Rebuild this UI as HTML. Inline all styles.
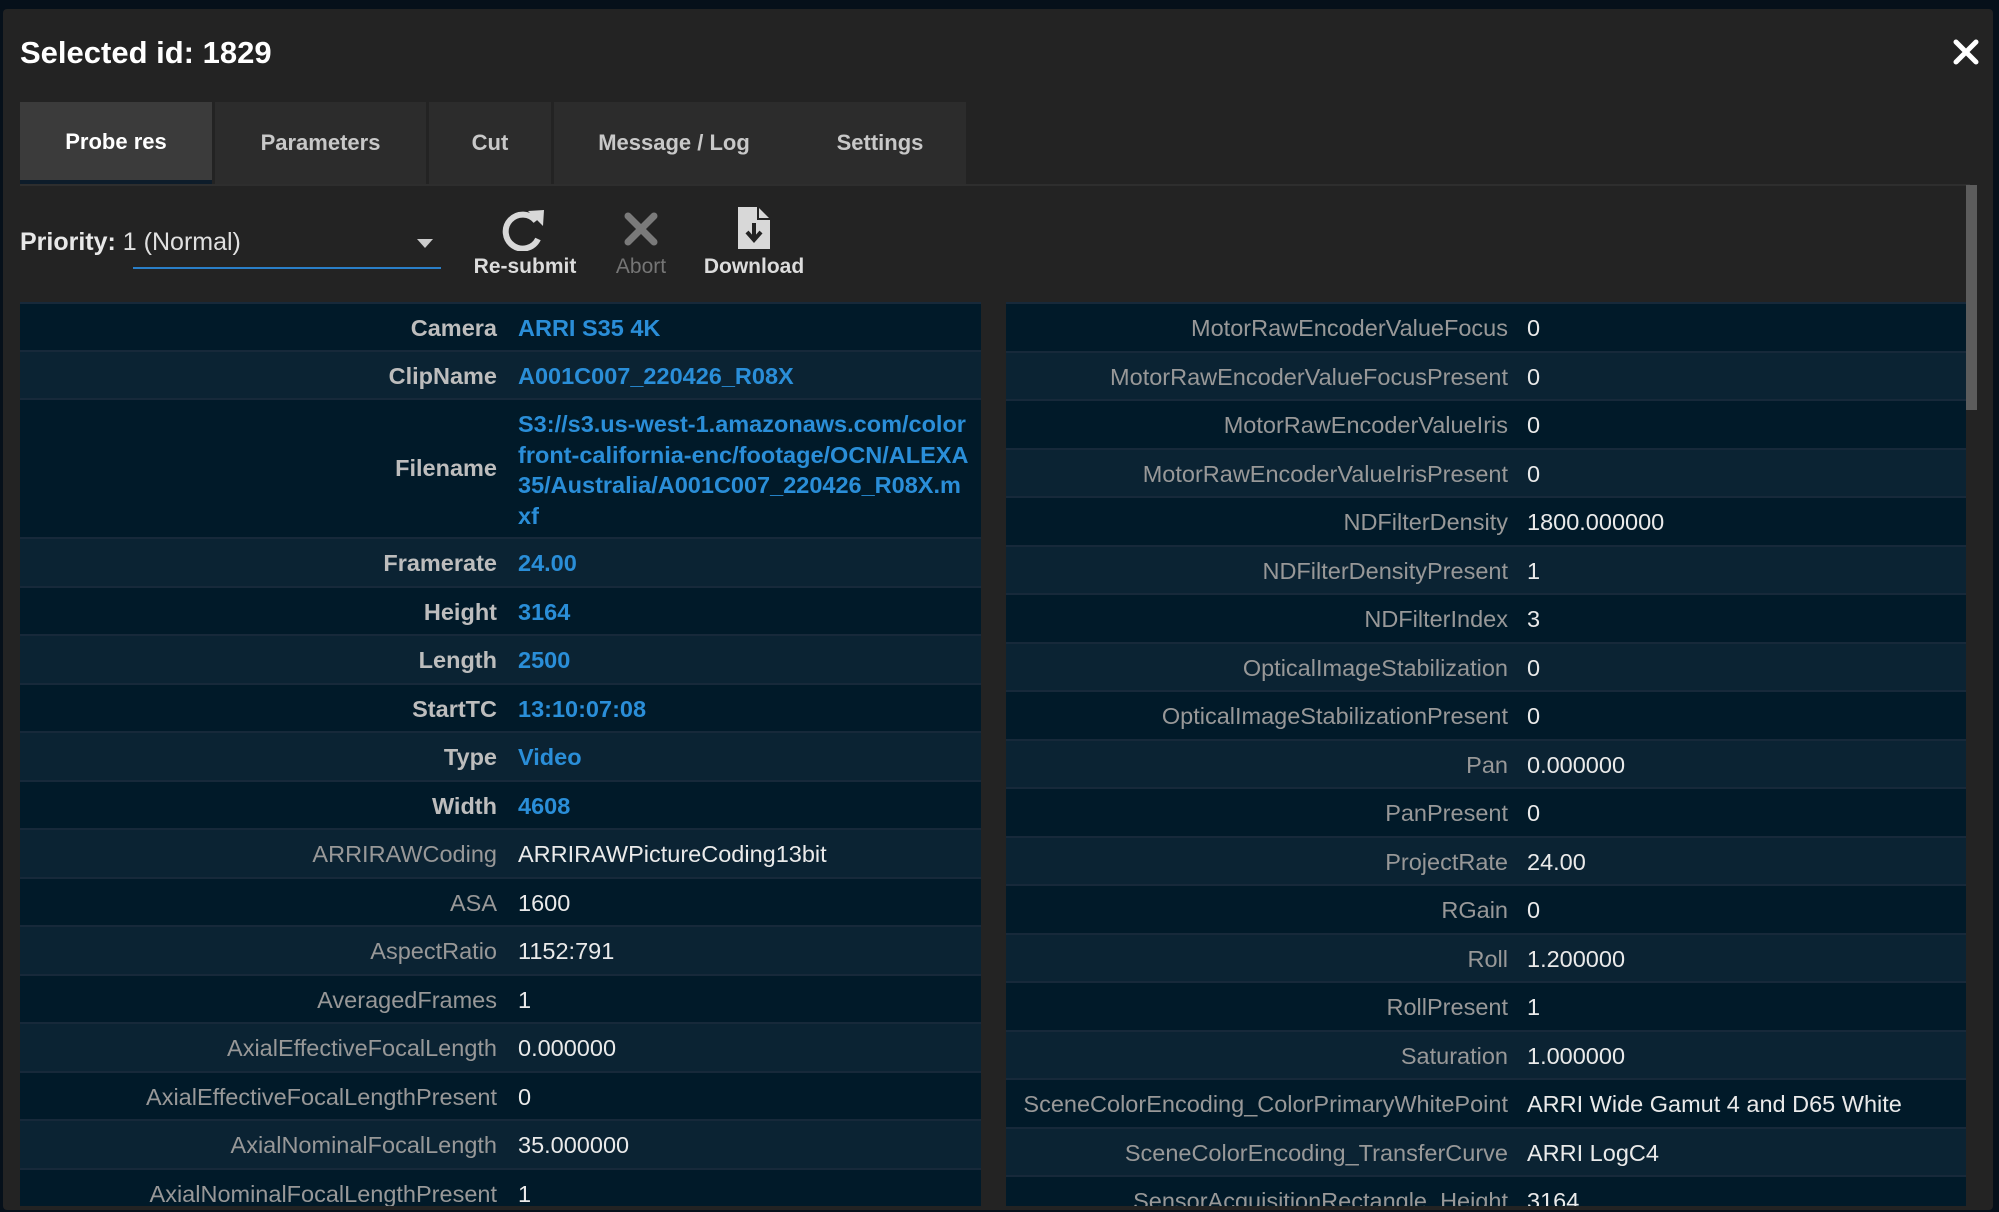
<!DOCTYPE html>
<html><head><meta charset="utf-8"><style>
*{margin:0;padding:0;box-sizing:border-box}
body{width:1999px;height:1212px;background:#06101a;overflow:hidden;font-family:"Liberation Sans",sans-serif;position:relative}
.modal{position:absolute;left:3px;top:9px;width:1990px;height:1201px;background:#232323;border-radius:4px;overflow:hidden}
.title{position:absolute;left:17px;top:26px;color:#fff;font-weight:bold;font-size:31px}
.close{position:absolute;left:1950px;top:30px}
.tabs{position:absolute;left:17px;top:93px;height:82px;width:946px;background:#2c2c2c}
.tab{position:absolute;top:0;height:82px;line-height:82px;text-align:center;color:#c8c8c8;font-size:22px;font-weight:bold}
.tab.a{background:#3b3b3b;color:#fff;border-bottom:4px solid #0d1c2a;line-height:80px}
.sep{position:absolute;top:0;width:3px;height:82px;background:#232323}
.hline{position:absolute;left:17px;top:175px;width:1950px;height:2px;background:#2e2e2e}
.prio{position:absolute;left:17px;top:219px;color:#e0e0e0;font-size:25px}
.prio b{color:#e8e8e8}
.uline{position:absolute;left:130px;top:258px;width:308px;height:2px;background:#2a7fc8}
.arrow{position:absolute;left:414px;top:230px;width:0;height:0;border-left:8px solid transparent;border-right:8px solid transparent;border-top:9px solid #ccc}
.btn{position:absolute;top:246px;font-size:21px;font-weight:bold;color:#dcdcdc;text-align:center}
.panel{position:absolute;top:293px;height:904px;overflow:hidden}
.row{position:absolute;left:0;width:100%;border-top:2px solid #17293a;font-size:23.5px}
.row .k{position:absolute;top:11px !important;text-align:right;color:#989898;white-space:nowrap}
.row .v{position:absolute;color:#eaeaea;white-space:nowrap}
.pl .k{right:484px !important}.pl .v{left:498px !important}
.d{background:#011a29}.l{background:#0b2333}
.row.h .k{color:#bdbdbd;font-weight:bold}.row.h .v{color:#2a8ed8;font-weight:bold}
.scroll{position:absolute;left:1963px;top:176px;width:11px;height:225px;background:#5c5c5c}
</style></head><body>
<div class="modal">
<div class="title">Selected id: 1829</div>
<svg class="close" width="26" height="26" viewBox="0 0 26 26"><path d="M3 3L23 23M23 3L3 23" stroke="#fff" stroke-width="5" stroke-linecap="round"/></svg>
<div class="tabs">
<div class="tab a" style="left:0;width:192px">Probe res</div>
<div class="sep" style="left:192px"></div>
<div class="tab" style="left:195px;width:211px">Parameters</div>
<div class="sep" style="left:406px"></div>
<div class="tab" style="left:409px;width:122px">Cut</div>
<div class="sep" style="left:531px"></div>
<div class="tab" style="left:534px;width:240px">Message / Log</div>
<div class="tab" style="left:774px;width:172px">Settings</div>
</div>
<div class="hline"></div>
<div class="prio"><b>Priority:</b> 1 (Normal)</div>
<div class="uline"></div>
<div class="arrow"></div>
<svg style="position:absolute;left:497px;top:198px" width="48" height="44" viewBox="0 0 48 44"><path d="M36 14A17 17 0 1 0 38 32" fill="none" stroke="#d8d8d8" stroke-width="6"/><path d="M28 4L44 3L43 19Z" fill="#d8d8d8"/></svg>
<div class="btn" style="left:463px;width:118px">Re-submit</div>
<svg style="position:absolute;left:620px;top:202px" width="36" height="36" viewBox="0 0 36 36"><path d="M5 5L31 31M31 5L5 31" stroke="#7a7a7a" stroke-width="7" stroke-linecap="round"/></svg>
<div class="btn" style="left:600px;width:76px;color:#757575;font-weight:normal">Abort</div>
<svg style="position:absolute;left:733px;top:196px" width="36" height="46" viewBox="0 0 36 46"><path d="M2 2H22L34 14V44H2Z" fill="#d8d8d8"/><path d="M22 2V14H34" fill="none" stroke="#232323" stroke-width="2"/><path d="M18 18V33M11 27L18 35L25 27" fill="none" stroke="#232323" stroke-width="4"/></svg>
<div class="btn" style="left:695px;width:112px">Download</div>

<div class="panel pl" style="left:17px;width:961px">
<div class="row d h" style="top:0;height:48px"><span class="k">Camera</span><span class="v" style="top:11px">ARRI S35 4K</span></div>
<div class="row l h" style="top:48px;height:48px"><span class="k">ClipName</span><span class="v" style="top:11px">A001C007_220426_R08X</span></div>
<div class="row d h" style="top:96px;height:139px"><span class="k" style="top:55px !important">Filename</span><span class="v" style="top:9px;line-height:30.5px">S3://s3.us-west-1.amazonaws.com/color<br>front-california-enc/footage/OCN/ALEXA<br>35/Australia/A001C007_220426_R08X.m<br>xf</span></div>
<div class="row l h" style="top:235px;height:48.5px"><span class="k">Framerate</span><span class="v" style="top:11px">24.00</span></div>
<div class="row d h" style="top:283.5px;height:48.5px"><span class="k">Height</span><span class="v" style="top:11px">3164</span></div>
<div class="row l h" style="top:332px;height:48.5px"><span class="k">Length</span><span class="v" style="top:11px">2500</span></div>
<div class="row d h" style="top:380.5px;height:48.5px"><span class="k">StartTC</span><span class="v" style="top:11px">13:10:07:08</span></div>
<div class="row l h" style="top:429px;height:48.5px"><span class="k">Type</span><span class="v" style="top:11px">Video</span></div>
<div class="row d h" style="top:477.5px;height:48.5px"><span class="k">Width</span><span class="v" style="top:11px">4608</span></div>
<div class="row l" style="top:526px;height:48.5px"><span class="k">ARRIRAWCoding</span><span class="v" style="top:11px">ARRIRAWPictureCoding13bit</span></div>
<div class="row d" style="top:574.5px;height:48.5px"><span class="k">ASA</span><span class="v" style="top:11px">1600</span></div>
<div class="row l" style="top:623px;height:48.5px"><span class="k">AspectRatio</span><span class="v" style="top:11px">1152:791</span></div>
<div class="row d" style="top:671.5px;height:48.5px"><span class="k">AveragedFrames</span><span class="v" style="top:11px">1</span></div>
<div class="row l" style="top:720px;height:48.5px"><span class="k">AxialEffectiveFocalLength</span><span class="v" style="top:11px">0.000000</span></div>
<div class="row d" style="top:768.5px;height:48.5px"><span class="k">AxialEffectiveFocalLengthPresent</span><span class="v" style="top:11px">0</span></div>
<div class="row l" style="top:817px;height:48.5px"><span class="k">AxialNominalFocalLength</span><span class="v" style="top:11px">35.000000</span></div>
<div class="row d" style="top:865.5px;height:48.5px"><span class="k">AxialNominalFocalLengthPresent</span><span class="v" style="top:11px">1</span></div>
</div>

<div class="panel" style="left:1003px;width:960px">
<div class="row d" style="top:0;height:48.5px"><span class="k" style="right:458px">MotorRawEncoderValueFocus</span><span class="v" style="left:521px;top:11px">0</span></div>
<div class="row l" style="top:48.5px;height:48.5px"><span class="k" style="right:458px">MotorRawEncoderValueFocusPresent</span><span class="v" style="left:521px;top:11px">0</span></div>
<div class="row d" style="top:97px;height:48.5px"><span class="k" style="right:458px">MotorRawEncoderValueIris</span><span class="v" style="left:521px;top:11px">0</span></div>
<div class="row l" style="top:145.5px;height:48.5px"><span class="k" style="right:458px">MotorRawEncoderValueIrisPresent</span><span class="v" style="left:521px;top:11px">0</span></div>
<div class="row d" style="top:194px;height:48.5px"><span class="k" style="right:458px">NDFilterDensity</span><span class="v" style="left:521px;top:11px">1800.000000</span></div>
<div class="row l" style="top:242.5px;height:48.5px"><span class="k" style="right:458px">NDFilterDensityPresent</span><span class="v" style="left:521px;top:11px">1</span></div>
<div class="row d" style="top:291px;height:48.5px"><span class="k" style="right:458px">NDFilterIndex</span><span class="v" style="left:521px;top:11px">3</span></div>
<div class="row l" style="top:339.5px;height:48.5px"><span class="k" style="right:458px">OpticalImageStabilization</span><span class="v" style="left:521px;top:11px">0</span></div>
<div class="row d" style="top:388px;height:48.5px"><span class="k" style="right:458px">OpticalImageStabilizationPresent</span><span class="v" style="left:521px;top:11px">0</span></div>
<div class="row l" style="top:436.5px;height:48.5px"><span class="k" style="right:458px">Pan</span><span class="v" style="left:521px;top:11px">0.000000</span></div>
<div class="row d" style="top:485px;height:48.5px"><span class="k" style="right:458px">PanPresent</span><span class="v" style="left:521px;top:11px">0</span></div>
<div class="row l" style="top:533.5px;height:48.5px"><span class="k" style="right:458px">ProjectRate</span><span class="v" style="left:521px;top:11px">24.00</span></div>
<div class="row d" style="top:582px;height:48.5px"><span class="k" style="right:458px">RGain</span><span class="v" style="left:521px;top:11px">0</span></div>
<div class="row l" style="top:630.5px;height:48.5px"><span class="k" style="right:458px">Roll</span><span class="v" style="left:521px;top:11px">1.200000</span></div>
<div class="row d" style="top:679px;height:48.5px"><span class="k" style="right:458px">RollPresent</span><span class="v" style="left:521px;top:11px">1</span></div>
<div class="row l" style="top:727.5px;height:48.5px"><span class="k" style="right:458px">Saturation</span><span class="v" style="left:521px;top:11px">1.000000</span></div>
<div class="row d" style="top:776px;height:48.5px"><span class="k" style="right:458px">SceneColorEncoding_ColorPrimaryWhitePoint</span><span class="v" style="left:521px;top:11px">ARRI Wide Gamut 4 and D65 White</span></div>
<div class="row l" style="top:824.5px;height:48.5px"><span class="k" style="right:458px">SceneColorEncoding_TransferCurve</span><span class="v" style="left:521px;top:11px">ARRI LogC4</span></div>
<div class="row d" style="top:873px;height:48.5px"><span class="k" style="right:458px">SensorAcquisitionRectangle_Height</span><span class="v" style="left:521px;top:11px">3164</span></div>
</div>
<div class="scroll"></div>
</div>
</body></html>
